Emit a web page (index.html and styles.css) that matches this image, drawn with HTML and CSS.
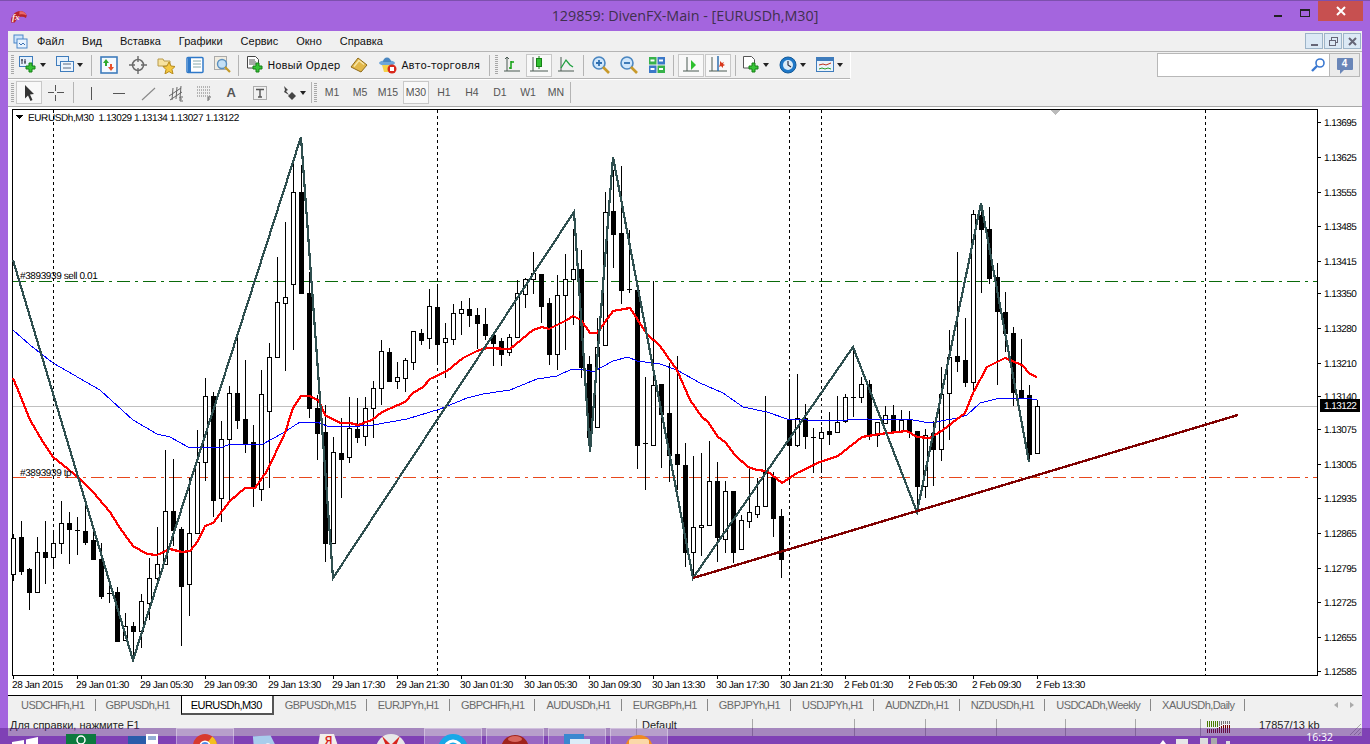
FILE: index.html
```html
<!DOCTYPE html>
<html lang="ru">
<head>
<meta charset="utf-8">
<title>129859: DivenFX-Main - [EURUSDh,M30]</title>
<link rel="stylesheet" href="styles.css">
</head>
<body>
<div class="window">
  <header class="titlebar">
    <div class="tb-left">
      <svg class="logo" viewBox="0 0 18 14"><path d="M1 13.500C0 7 5 1 11 1c3 0 6 2 7 5l-1 2.500c-3-2-7-1-9 0L5 13.500z" fill="#b8242a"/><path d="M10 1.500c4-.5 7 1.500 7.500 4.500-2.500-1.500-5-1.500-7.500-1z" fill="#e8686a"/><text class="logo-t" x="2" y="11">fx</text></svg>
    </div>
    <div class="title">129859: DivenFX-Main - [EURUSDh,M30]</div>
    <div class="winbtns">
      <div class="wb"><span class="wb-min"></span></div>
      <div class="wb"><span class="wb-max"></span></div>
      <div class="wb wb-close"><svg viewBox="0 0 10 10" class="wb-x"><path d="M1 1l8 8M9 1l-8 8"/></svg></div>
    </div>
  </header>
  <div class="client">
    <nav class="menubar">
      <svg class="mdi-ico" viewBox="0 0 15 15"><rect x="1" y="1" width="9" height="8" fill="#cfe4fb" stroke="#4a86c8"/><rect x="4" y="5" width="10" height="9" fill="#e8f2fd" stroke="#4a86c8"/><path d="M6 9l2 2 2-2 2 2" fill="none" stroke="#3a6fb0"/></svg>
      <span class="menu m1">Файл</span><span class="menu">Вид</span><span class="menu">Вставка</span><span class="menu">Графики</span><span class="menu">Сервис</span><span class="menu">Окно</span><span class="menu">Справка</span>
      <div class="mdibtns">
        <div class="mb"><span class="mb-min"></span></div>
        <div class="mb"><svg viewBox="0 0 11 11" class="mb-ico"><rect x="3.500" y="1.500" width="6" height="5" fill="none" stroke="#667"/><rect x="1.500" y="4.500" width="6" height="5" fill="#dce8f4" stroke="#667"/></svg></div>
        <div class="mb"><svg viewBox="0 0 11 11" class="mb-ico"><path d="M2 2l7 7M9 2l-7 7" stroke="#667" stroke-width="2"/></svg></div>
      </div>
    </nav>
    <div class="toolrow row1">
      <div class="grip"></div>
      <div class="tool w37"><svg class="ic" viewBox="0 0 18 18"><rect x=".5" y=".5" width="13" height="10" fill="#e6f1fc" stroke="#3f7cbc"/><path d="M3 3v5M2 4h2M6 3v5M5 6h2" stroke="#334"/><path d="M10 7h3v3h3v3h-3v3h-3v-3H7v-3h3z" fill="#37c437" stroke="#178017"/></svg><i class="caret"></i></div>
      <div class="tool w37"><svg class="ic" viewBox="0 0 18 18"><rect x=".5" y=".5" width="12" height="9" fill="#e6f1fc" stroke="#3f7cbc"/><rect x="4.500" y="5.500" width="13" height="10" fill="#eef5fd" stroke="#3f7cbc"/><path d="M7 8h8M7 12h8" stroke="#5a6a80"/></svg><i class="caret"></i></div>
      <div class="sep s-a"></div>
      <div class="tool w28"><svg class="ic" viewBox="0 0 18 18"><rect x="1" y="1" width="16" height="16" fill="#f4f9ff" stroke="#3f7cbc" stroke-width="1.600"/><path d="M6 3l3 4H7v3H5V7H3z" fill="#2eaa2e"/><path d="M11 15l-3-4h2V8h2v3h2z" fill="#e8502a"/></svg></div>
      <div class="tool w28"><svg class="ic" viewBox="0 0 18 18"><circle cx="9" cy="9" r="5.500" fill="none" stroke="#6a6a6a" stroke-width="1.500"/><path d="M9 0v6M9 12v6M0 9h6M12 9h6" stroke="#6a6a6a" stroke-width="1.400"/></svg></div>
      <div class="tool w28"><svg class="ic" viewBox="0 0 18 18"><path d="M1 3h5l1 2h6v5H1z" fill="#f7e2a0" stroke="#b89a4a"/><path d="M12 6l2 4 4 .5-3 3 1 4.500-4-2.500-4 2.500 1-4.500-3-3 4-.5z" fill="#f5c842" stroke="#b58a1c"/></svg></div>
      <div class="tool w28"><svg class="ic" viewBox="0 0 18 18"><rect x="1" y="1.500" width="16" height="15" rx="1" fill="#fff" stroke="#2f79c9" stroke-width="1.500"/><rect x="2" y="2" width="3" height="14" fill="#2f79c9"/><path d="M7 5h8M7 8h8M7 11h8" stroke="#8aa"/></svg></div>
      <div class="tool w28"><svg class="ic ic-w" viewBox="0 0 18 18"><rect x=".5" y=".5" width="12" height="13" fill="#f1ece0" stroke="#aaa"/><circle cx="8" cy="8" r="4.500" fill="#c4e0f6" stroke="#5a8fbf" stroke-width="1.400"/><path d="M11 11l5 5" stroke="#c49a2a" stroke-width="2.200"/></svg></div>
      <div class="sep s-b"></div>
      <div class="tool order"><svg class="ic" viewBox="0 0 18 18"><path d="M1.500.5h8l3 3V12h-11z" fill="#fff" stroke="#444"/><path d="M3 4h6M3 6h7M3 8h7" stroke="#555"/><path d="M10 7h3v3h3v3h-3v3h-3v-3H7v-3h3z" fill="#37c437" stroke="#178017"/></svg><span class="tool-txt">Новый Ордер</span></div>
      <div class="tool w24"><svg class="ic" viewBox="0 0 18 18"><path d="M1 11L8 2l9 7-6 7z" fill="#e2b84a" stroke="#8e6a1a"/><path d="M4 10.500l5-6 5 4" fill="none" stroke="#f6e6a8" stroke-width="1.400"/></svg></div>
      <div class="tool auto"><svg class="ic" viewBox="0 0 18 18"><ellipse cx="8" cy="7" rx="8" ry="2.800" fill="#6fa6d8"/><path d="M4 6c0-6 8-6 8 0z" fill="#4a86c0"/><path d="M3 9h10l-2 7H5z" fill="#f4d24a"/><circle cx="13" cy="13" r="4.500" fill="#d8281c"/><rect x="11" y="11" width="4" height="4" fill="#fff"/></svg><span class="tool-txt">Авто-торговля</span></div>
      <div class="sep s-c"></div>
      <div class="grip g2"></div>
      <div class="tool w28n t1"><svg class="ic" viewBox="0 0 18 18"><path class="ax" d="M4 1v14M1 15h16M2 3l2-2 2 2"/><path d="M8 5v8M6 12h2M8 6h3" stroke="#10a010" fill="none" stroke-width="1.500"/></svg></div>
      <div class="tool act w26"><svg class="ic" viewBox="0 0 18 18"><path class="ax" d="M3 1v14M0 15h18"/><path d="M9 0v13" stroke="#178017"/><rect x="6.500" y="2.500" width="5" height="8" fill="#30c030" stroke="#178017"/></svg></div>
      <div class="tool w28n"><svg class="ic" viewBox="0 0 18 18"><path class="ax" d="M4 1v14M1 15h16"/><path d="M4 12l5-8 4 5 3 2" fill="none" stroke="#20a040" stroke-width="1.300"/></svg></div>
      <div class="sep s-d"></div>
      <div class="tool w28n"><svg class="ic" viewBox="0 0 18 18"><circle cx="7" cy="7" r="6" fill="#cfe6fb" stroke="#4a86c0" stroke-width="1.600"/><path d="M4 7h6M7 4v6" stroke="#2f6fb0" stroke-width="1.800"/><path d="M11 11l6 6" stroke="#c89a2a" stroke-width="2.600"/></svg></div>
      <div class="tool w28n"><svg class="ic" viewBox="0 0 18 18"><circle cx="7" cy="7" r="6" fill="#cfe6fb" stroke="#4a86c0" stroke-width="1.600"/><path d="M4 7h6" stroke="#2f6fb0" stroke-width="1.800"/><path d="M11 11l6 6" stroke="#c89a2a" stroke-width="2.600"/></svg></div>
      <div class="tool w28n"><svg class="ic" viewBox="0 0 18 18"><rect x="1" y="1" width="7.500" height="7.500" fill="#36b24a"/><rect x="9.500" y="1" width="7.500" height="7.500" fill="#3a78c8"/><rect x="1" y="9.500" width="7.500" height="7.500" fill="#3a78c8"/><rect x="9.500" y="9.500" width="7.500" height="7.500" fill="#36b24a"/><path d="M2.500 4.500h4M11 4.500h4M2.500 13h4M11 13h4" stroke="#fff" stroke-width="2"/></svg></div>
      <div class="sep s-e"></div>
      <div class="tool act w26"><svg class="ic" viewBox="0 0 18 18"><path class="ax" d="M5 1v14M1 15h16"/><path d="M9 4l5 5-5 5z" fill="#2ec02e"/></svg></div>
      <div class="tool act w26 m2"><svg class="ic" viewBox="0 0 18 18"><path class="ax" d="M3 1v14M0 15h18"/><path d="M9 0v15" stroke="#2f6fb0" stroke-width="1.500"/><path d="M11 5l2 2 2-1-1 2 2 1-2 1v2l-2-2-2 1 1-3z" fill="#d8381c"/></svg></div>
      <div class="sep s-f"></div>
      <div class="tool w37"><svg class="ic" viewBox="0 0 18 18"><path d="M1.500.5h8l3 3V12h-11z" fill="#fff" stroke="#555"/><path d="M10 7h3v3h3v3h-3v3h-3v-3H7v-3h3z" fill="#37c437" stroke="#178017"/></svg><i class="caret"></i></div>
      <div class="tool w37"><svg class="ic" viewBox="0 0 18 18"><circle cx="9" cy="9" r="8" fill="#1f78c8" stroke="#155a98"/><circle cx="9" cy="9" r="5" fill="#dcecf8"/><path d="M9 5v4l3 2" fill="none" stroke="#334" stroke-width="1.200"/></svg><i class="caret"></i></div>
      <div class="tool w37"><svg class="ic" viewBox="0 0 18 18"><rect x=".5" y="1.500" width="17" height="14" fill="#eaf3fb" stroke="#3f7cbc"/><rect x="1" y="2" width="16" height="3" fill="#3f7cbc"/><path d="M3 9l4-1 3 1 5-2" fill="none" stroke="#c03018"/><path d="M3 13l3-1 3 1 3-1 3 1" fill="none" stroke="#2a9a2a"/></svg><i class="caret"></i></div>
      <div class="tb-end"></div>
      <div class="search"><svg class="mag" viewBox="0 0 14 14"><circle cx="9" cy="5" r="4" fill="#fff" stroke="#3a78d0" stroke-width="1.600"/><path d="M6 8l-5 5" stroke="#3a78d0" stroke-width="2.400"/></svg></div>
      <div class="bubble-btn"><div class="bubble">4</div></div>
    </div>
    <div class="toolrow row2">
      <div class="grip"></div>
      <div class="tool act w26 s2"><svg class="ic" viewBox="0 0 18 18"><path d="M5 1l9 9-4 .5 2.500 5.500-2 1L8 11.500 5 14.500z" fill="#333"/></svg></div>
      <div class="tool w28"><svg class="ic" viewBox="0 0 18 18"><path d="M8.500 1v6M8.500 11v6M1 8.500h6M10 8.500h7" stroke="#555"/></svg></div>
      <div class="sep s-g"></div>
      <div class="tool w28"><svg class="ic" viewBox="0 0 18 18"><path d="M9.500 3v13" stroke="#555"/></svg></div>
      <div class="tool w28"><svg class="ic" viewBox="0 0 18 18"><path d="M3 9.500h12" stroke="#555"/></svg></div>
      <div class="tool w28"><svg class="ic" viewBox="0 0 18 18"><path d="M3 16L16 4" stroke="#888" stroke-width="1.100"/></svg></div>
      <div class="tool w28"><svg class="ic" viewBox="0 0 18 18"><path d="M2 12l12-8M3 16l12-8M6 4l-1 12M10 3l-1 12M14 2l-1 12" stroke="#666"/><path d="M13 17v-4h3M13 15h2M13 17h3" stroke="#666" fill="none"/></svg></div>
      <div class="tool w28"><svg class="ic" viewBox="0 0 18 18"><path d="M1 3h14M1 6h14M1 9h14M1 12h14" stroke="#777" stroke-dasharray="1 1"/><path d="M12 17v-4h3M12 15h2" stroke="#666" fill="none"/></svg></div>
      <div class="tool w28 letter">A</div>
      <div class="tool w28"><svg class="ic" viewBox="0 0 18 18"><rect x="2.500" y="2.500" width="13" height="13" fill="none" stroke="#666" stroke-dasharray="1 1"/><path d="M5 5.500h8M9 5.500V13M7 13h4" stroke="#555" stroke-width="1.400" fill="none"/></svg></div>
      <div class="tool w37"><svg class="ic" viewBox="0 0 18 18"><path d="M5 2l4 4-2 1 3 4-5-3 1-2z" fill="#444"/><path d="M13 8l4 4-4 4-4-4z" fill="#444"/></svg><i class="caret"></i></div>
      <div class="sep"></div>
      <div class="grip g3"></div>
      <div class="tf">M1</div><div class="tf">M5</div><div class="tf">M15</div><div class="tf tf-act">M30</div><div class="tf">H1</div><div class="tf">H4</div><div class="tf">D1</div><div class="tf">W1</div><div class="tf">MN</div>
      <div class="sep"></div>
    </div>
    <div class="chart-wrap">
      <svg class="chart" viewBox="8 107 1354 588" width="1354" height="588">
        <rect class="frame" x="12.500" y="109.500" width="1305" height="566"/>
        <path class="grid" d="M53.500 110V675M437.500 110V675M789.500 110V675M821.500 110V675M1205.500 110V675"/>
        <path class="lvl-g" d="M13 281.500H1317"/>
        <path class="lvl-o" d="M13 477.500H1317"/>
        <path class="lvl-p" d="M13 406.500H1317"/>
        <path class="wick" d="M13.500 534V581M21.500 521V575M29.500 568V610M37.500 537V592M45.500 521V584M53.500 530V568M61.500 501V554M69.500 512V564M77.500 517V555M75 530.500h5M85.500 505V545M93.500 528V559M101.500 543V599M109.500 582V603M107 593.500h5M117.500 587V642M125.500 613V640M133.500 622V660M141.500 594V648M149.500 558V620M157.500 527V583M165.500 450V564M173.500 459V546M181.500 527V646M189.500 478V616M197.500 430V533M205.500 378V481M213.500 392V517M221.500 421V522M229.500 386V503M237.500 338V429M245.500 360V453M253.500 425V507M261.500 370V501M269.500 343V488M277.500 257V357M285.500 222V371M293.500 163V350M301.500 165V293M309.500 272V418M317.500 395V460M325.500 405V562M333.500 437V543M341.500 418V498M349.500 397V463M357.500 398V443M365.500 397V446M373.500 381V438M381.500 340V405M389.500 348V382M397.500 362V389M405.500 358V392M413.500 331V370M421.500 329V345M429.500 289V349M437.500 287V365M445.500 323V378M453.500 304V345M461.500 301V335M469.500 298V327M477.500 308V349M485.500 308V340M493.500 333V366M501.500 338V366M509.500 334V356M517.500 280V337M525.500 278V308M533.500 252V294M541.500 274V323M549.500 298V365M557.500 275V370M565.500 254V350M573.500 229V325M581.500 250V378M589.500 356V452M597.500 318V427M605.500 192V345M613.500 170V268M621.500 166V304M629.500 230V293M627 289.500h5M637.500 290V469M645.500 377V490M643 443.500h5M653.500 281V445M661.500 384V468M669.500 363V482M677.500 356V490M685.500 443V567M693.500 456V578M701.500 453V556M709.500 441V525M717.500 462V562M725.500 481V553M733.500 491V563M741.500 515V549M749.500 468V528M757.500 478V518M765.500 396V506M773.500 472V537M781.500 509V578M789.500 379V485M797.500 374V447M805.500 404V449M813.500 428V473M811 437.500h5M821.500 427V470M829.500 412V445M837.500 396V432M845.500 394V423M853.500 347V417M851 397.500h5M861.500 377V403M869.500 380V440M877.500 422V447M885.500 406V423M893.500 405V431M901.500 410V431M909.500 411V438M917.500 431V510M925.500 429V498M933.500 421V486M941.500 367V461M949.500 330V440M957.500 252V372M965.500 318V387M973.500 210V392M981.500 203V293M989.500 207V284M997.500 263V385M1005.500 292V352M1013.500 327V406M1021.500 339V398M1029.500 385V462M1037.500 400V453"/>
        <path class="bull" d="M11.500 538.500h4v36h-4zM35.500 552.500h4v40h-4zM51.500 543.500h4v14h-4zM59.500 523.500h4v20h-4zM123.500 626.500h4v14h-4zM139.500 601.500h4v30h-4zM147.500 578.500h4v25h-4zM155.500 564.500h4v14h-4zM163.500 511.500h4v53h-4zM187.500 533.500h4v51h-4zM195.500 462.500h4v71h-4zM203.500 396.500h4v66h-4zM219.500 439.500h4v59h-4zM227.500 393.500h4v46h-4zM259.500 394.500h4v95h-4zM267.500 357.500h4v54h-4zM275.500 302.500h4v55h-4zM283.500 297.500h4v6h-4zM291.500 192.500h4v92h-4zM331.500 452.500h4v91h-4zM347.500 428.500h4v29h-4zM363.500 408.500h4v28h-4zM371.500 388.500h4v20h-4zM379.500 351.500h4v37h-4zM395.500 377.500h4v4h-4zM403.500 360.500h4v18h-4zM411.500 331.500h4v31h-4zM427.500 306.500h4v32h-4zM443.500 338.500h4v4h-4zM451.500 313.500h4v26h-4zM459.500 309.500h4v4h-4zM507.500 337.500h4v15h-4zM515.500 293.500h4v44h-4zM523.500 279.500h4v15h-4zM531.500 273.500h4v6h-4zM555.500 295.500h4v59h-4zM563.500 279.500h4v16h-4zM571.500 269.500h4v10h-4zM595.500 347.500h4v80h-4zM603.500 212.500h4v133h-4zM651.500 385.500h4v60h-4zM691.500 527.500h4v25h-4zM699.500 525.500h4v2h-4zM707.500 481.500h4v44h-4zM723.500 491.500h4v48h-4zM739.500 520.500h4v29h-4zM747.500 512.500h4v9h-4zM755.500 506.500h4v8h-4zM763.500 472.500h4v34h-4zM795.500 418.500h4v27h-4zM819.500 432.500h4v6h-4zM835.500 422.500h4v10h-4zM843.500 397.500h4v24h-4zM859.500 384.500h4v13h-4zM875.500 422.500h4v13h-4zM883.500 415.500h4v8h-4zM899.500 420.500h4v11h-4zM923.500 435.500h4v51h-4zM939.500 394.500h4v55h-4zM947.500 357.500h4v36h-4zM971.500 214.500h4v168h-4zM1035.500 406.500h4v47h-4z"/>
        <path class="bear" d="M19.500 537.500h4v34h-4zM27.500 569.500h4v23h-4zM43.500 552.500h4v5h-4zM67.500 523.500h4v6h-4zM83.500 531.500h4v11h-4zM91.500 540.500h4v19h-4zM99.500 559.500h4v37h-4zM115.500 592.500h4v49h-4zM131.500 626.500h4v5h-4zM171.500 511.500h4v19h-4zM179.500 529.500h4v57h-4zM211.500 396.500h4v104h-4zM235.500 393.500h4v27h-4zM243.500 419.500h4v24h-4zM251.500 442.500h4v46h-4zM299.500 192.500h4v101h-4zM307.500 293.500h4v115h-4zM315.500 408.500h4v25h-4zM323.500 432.500h4v111h-4zM339.500 453.500h4v6h-4zM355.500 429.500h4v8h-4zM387.500 352.500h4v29h-4zM419.500 333.500h4v7h-4zM435.500 307.500h4v37h-4zM467.500 309.500h4v6h-4zM475.500 315.500h4v8h-4zM483.500 324.500h4v11h-4zM491.500 335.500h4v8h-4zM499.500 341.500h4v13h-4zM539.500 274.500h4v32h-4zM547.500 303.500h4v51h-4zM579.500 269.500h4v98h-4zM587.500 364.500h4v73h-4zM611.500 211.500h4v23h-4zM619.500 233.500h4v57h-4zM635.500 290.500h4v155h-4zM659.500 384.500h4v30h-4zM667.500 413.500h4v42h-4zM675.500 454.500h4v10h-4zM683.500 465.500h4v87h-4zM715.500 481.500h4v56h-4zM731.500 491.500h4v61h-4zM771.500 477.500h4v41h-4zM779.500 516.500h4v43h-4zM787.500 420.500h4v25h-4zM803.500 418.500h4v18h-4zM827.500 431.500h4v3h-4zM867.500 384.500h4v51h-4zM891.500 415.500h4v16h-4zM907.500 419.500h4v12h-4zM915.500 431.500h4v55h-4zM931.500 433.500h4v16h-4zM955.500 356.500h4v5h-4zM963.500 360.500h4v22h-4zM979.500 215.500h4v14h-4zM987.500 229.500h4v49h-4zM995.500 277.500h4v34h-4zM1003.500 312.500h4v21h-4zM1011.500 333.500h4v59h-4zM1019.500 390.500h4v8h-4zM1027.500 395.500h4v59h-4z"/>
        <polyline class="ma-blue" points="13,330 30,345 53,363 100,390 133,420 157,434 170,437 188,447 223,447 230,444 263,444 283,433 300,422 317,422 327,426 347,427 373,425 407,419 440,409 467,398 483,394 510,390 537,379 557,376 572,369 583,369 593,372 613,361 628,357 637,361 660,364 677,370 700,383 723,393 743,407 767,412 787,419 827,421 847,420 867,419 913,420 930,423 957,418 967,415 980,403 1000,398 1027,398 1037,400"/>
        <polyline class="ma-red" points="13,378 20,395 30,420 43,442 53,457 68,469 80,479 93,492 110,512 120,528 133,546 147,554 157,555 170,549 182,552 190,551 198,541 205,526 213,523 230,501 245,488 255,488 267,471 285,433 293,408 301,396 310,396 319,401 325,415 340,423 350,423 358,425 372,420 382,412 405,402 413,393 423,387 430,379 447,371 463,358 477,351 487,348 510,349 533,330 542,327 549,329 567,320 573,316 581,320 590,333 597,333 613,311 630,308 647,334 660,346 677,370 690,400 702,417 708,422 718,437 725,442 735,455 748,467 757,470 767,471 782,483 797,473 820,462 838,456 862,437 880,434 907,431 917,437 930,438 943,430 965,413 973,393 987,367 1005,358 1022,365 1030,374 1037,377"/>
        <polyline class="zigzag" points="13,260 133,660 301,137 333,578 574,212 590,452 613,157 693,578 853,347 917,512 981,203 1029,462"/>
        <line class="trend" x1="693" y1="578" x2="1238" y2="415"/>
        <path class="marker" d="M1050 110h10l-5 5z"/>
        <path class="legend-tri" d="M16 115h7l-3.500 4z"/>
        <text class="lbl lbl-l" x="28" y="121">EURUSDh,M30  1.13029 1.13134 1.13027 1.13122</text>
        <text class="lbl lbl-l" x="20" y="279">#3893939 sell 0.01</text>
        <text class="lbl lbl-l" x="20" y="476">#3893939 tp</text>
        <path class="tick" d="M1318 122.500h3M1318 157.500h3M1318 192.500h3M1318 226.500h3M1318 261.500h3M1318 293.500h3M1318 328.500h3M1318 363.500h3M1318 396.500h3M1318 429.500h3M1318 464.500h3M1318 498.500h3M1318 533.500h3M1318 568.500h3M1318 602.500h3M1318 637.500h3M1318 671.500h3M13.500 675v4M77.500 675v4M141.500 675v4M205.500 675v4M269.500 675v4M333.500 675v4M397.500 675v4M461.500 675v4M525.500 675v4M589.500 675v4M653.500 675v4M717.500 675v4M781.500 675v4M845.500 675v4M909.500 675v4M973.500 675v4M1037.500 675v4"/>
        <g class="lbl lbl-p">
          <text x="1324" y="126">1.13695</text><text x="1324" y="161">1.13625</text><text x="1324" y="196">1.13555</text><text x="1324" y="230">1.13485</text><text x="1324" y="265">1.13415</text><text x="1324" y="297">1.13350</text><text x="1324" y="332">1.13280</text><text x="1324" y="367">1.13210</text><text x="1324" y="400">1.13140</text><text x="1324" y="433">1.13075</text><text x="1324" y="468">1.13005</text><text x="1324" y="502">1.12935</text><text x="1324" y="537">1.12865</text><text x="1324" y="572">1.12795</text><text x="1324" y="606">1.12725</text><text x="1324" y="641">1.12655</text><text x="1324" y="675">1.12585</text>
        </g>
        <rect x="1320" y="399" width="40" height="13"/>
        <text class="lbl lbl-p tag" x="1324" y="409">1.13122</text>
        <g class="lbl lbl-l">
          <text x="12" y="688">28 Jan 2015</text><text x="76" y="688">29 Jan 01:30</text><text x="140" y="688">29 Jan 05:30</text><text x="204" y="688">29 Jan 09:30</text><text x="268" y="688">29 Jan 13:30</text><text x="332" y="688">29 Jan 17:30</text><text x="396" y="688">29 Jan 21:30</text><text x="460" y="688">30 Jan 01:30</text><text x="524" y="688">30 Jan 05:30</text><text x="588" y="688">30 Jan 09:30</text><text x="652" y="688">30 Jan 13:30</text><text x="716" y="688">30 Jan 17:30</text><text x="780" y="688">30 Jan 21:30</text><text x="844" y="688">2 Feb 01:30</text><text x="908" y="688">2 Feb 05:30</text><text x="972" y="688">2 Feb 09:30</text><text x="1036" y="688">2 Feb 13:30</text>
        </g>
      </svg>
    </div>
    <div class="tabs">
      <div class="tab first">USDCHFh,H1</div><div class="tab pre">GBPUSDh,H1</div><div class="tab active">EURUSDh,M30</div><div class="tab">GBPUSDh,M15</div><div class="tab">EURJPYh,H1</div><div class="tab">GBPCHFh,H1</div><div class="tab">AUDUSDh,H1</div><div class="tab">EURGBPh,H1</div><div class="tab">GBPJPYh,H1</div><div class="tab">USDJPYh,H1</div><div class="tab">AUDNZDh,H1</div><div class="tab">NZDUSDh,H1</div><div class="tab">USDCADh,Weekly</div><div class="tab">XAUUSDh,Daily</div>
      <div class="tab-arrows"><i class="ta-l"></i><i class="ta-r"></i></div>
    </div>
    <footer class="status">
      <div class="st st-help">Для справки, нажмите F1</div>
      <div class="st st-prof">Default</div>
      <div class="st st-b"></div>
      <div class="st st-c"></div>
      <div class="st st-d"></div>
      <div class="st st-d2"></div>
      <div class="st st-d3"></div>
      <div class="st st-d4"></div>
      <div class="st st-conn">
        <svg class="conn" viewBox="0 0 24 12"><path d="M1 0v6M3 0v6M5 0v6M7 0v6M9 0v6M11 0v6" stroke="#4a7a00"/><path d="M13 0v5M15 0v4M17 0v3M19 0v3M21 0v3M23 0v3" stroke="#777"/><path d="M1 8v4M3 8v4M5 8v4M7 8v4M9 8v4M11 7v5M13 6v6M15 5v7M17 4v8M19 4v8M21 4v8M23 4v8" stroke="#700000"/></svg>
        <span class="traffic">17857/13 kb</span>
      </div>
      <svg class="gripper" viewBox="0 0 13 13"><path d="M1 12L12 1M5 12l7-7M9 12l3-3" stroke="#aaa" fill="none"/></svg>
    </footer>
  </div>
</div>
<div class="taskbar">
  <div class="tk tk-first"><svg class="tk-ico" viewBox="0 0 26 24"><path d="M0 8l12-2v6H0zM14 5.500L26 3v9H14z" fill="#fff"/></svg></div>
  <div class="tk"><svg class="tk-ico tk-store" viewBox="0 0 30 24"><rect width="30" height="24" fill="#0c7a3e"/><circle cx="15" cy="6" r="4" fill="none" stroke="#fff" stroke-width="1.500"/></svg></div>
  <div class="tk"><svg class="tk-ico tk-word" viewBox="0 0 30 24"><rect width="30" height="24" y="2" fill="#2a5caa"/><rect x="18" y="0" width="12" height="24" fill="#fff"/><path d="M20 3h8M20 5h8" stroke="#2a5caa"/></svg></div>
  <div class="tk box"><svg class="tk-ico tk-chrome" viewBox="0 0 30 30"><circle cx="15" cy="15" r="15" fill="#d83a2e"/><path d="M15 15L30 15a15 15 0 0 0-6-12z" fill="#f4c01e"/><circle cx="15" cy="15" r="6" fill="#4a88e8" stroke="#fff" stroke-width="2"/></svg></div>
  <div class="tk"><svg class="tk-ico tk-blue" viewBox="0 0 34 24"><path d="M1 1l20-1 12 24H3z" fill="#a8cdec"/><circle cx="18" cy="14" r="5" fill="#fff"/></svg></div>
  <div class="tk"><svg class="tk-ico tk-ya" viewBox="0 0 26 24"><path d="M4 0h14l8 24H0z" fill="#f2eeea"/><text class="tk-ya-t" x="9" y="9.500">Я</text></svg></div>
  <div class="tk"><svg class="tk-ico tk-yb" viewBox="0 0 30 24"><circle cx="15" cy="15" r="15" fill="#e8e8e8"/><path d="M6 2l9 9 9-9-9 22z" fill="#d8241c"/></svg></div>
  <div class="tk box"><svg class="tk-ico tk-sk" viewBox="0 0 30 24"><circle cx="15" cy="15" r="15" fill="#18a8e8"/><circle cx="15" cy="15" r="8" fill="none" stroke="#fff" stroke-width="3"/></svg></div>
  <div class="tk box"><svg class="tk-ico tk-ball" viewBox="0 0 28 24"><circle cx="14" cy="15" r="14" fill="#a0241c"/><ellipse cx="14" cy="5" rx="7" ry="3" fill="#d8665e"/></svg></div>
  <div class="tk box"><svg class="tk-ico tk-app" viewBox="0 0 26 24"><rect width="20" height="24" fill="#3a88d0"/><rect x="6" y="5" width="20" height="19" fill="#dcecf8"/><circle cx="8" cy="14" r="4" fill="#c87820"/></svg></div>
  <div class="tk box"><svg class="tk-ico tk-or" viewBox="0 0 28 24"><circle cx="14" cy="15" r="14" fill="#f08a20"/><rect x="4" y="5" width="20" height="8" rx="2" fill="#fbd8a8"/></svg></div>
  <div class="tray">
    <svg class="tray-ico" viewBox="0 0 70 6"><path d="M0 6l3-4 3 4z" fill="#fff"/><rect x="16" y="1" width="12" height="5" fill="#e8e8e8"/><rect x="40" y="0" width="8" height="6" fill="#ddd"/><rect x="51" y="0" width="6" height="6" fill="#aaa"/><rect x="66" y="3" width="4" height="3" fill="#ddd"/></svg>
    <span class="clock">16:32</span>
  </div>
</div>
</body>
</html>
```
FILE: styles.css
```css
* { box-sizing: border-box; }
html, body { margin: 0; padding: 0; }
body { width: 1370px; height: 744px; overflow: hidden; position: relative; background: #a465de; font-family: "Noto Sans", sans-serif; }
.window { height: 736px; display: flex; flex-direction: column; background: #a465de; border-top: 1px solid #7d50ad; }
.titlebar { height: 30px; display: grid; grid-template-columns: 1fr auto 1fr; }
.tb-left { padding: 9px 0 0 10px; }
.logo { width: 17px; height: 13px; display: block; }
.logo-t { font: italic bold 10px "Liberation Serif", serif; fill: #fbe8e8; }
.title { font: 14.300px "Open Sans", sans-serif; color: #40304e; line-height: 30px; }
.winbtns { display: flex; justify-content: flex-end; padding-right: 7px; height: 20px; }
.wb { width: 27px; height: 20px; display: flex; align-items: center; justify-content: center; }
.wb-close { width: 45px; background: #c75050; }
.wb-min { width: 8px; height: 2px; background: #222; margin-top: 9px; }
.wb-max { width: 10px; height: 8px; border: 1px solid #222; border-top-width: 2px; margin-top: 3px; }
.wb-x { width: 10px; height: 10px; }
.wb-x path { stroke: #fff; stroke-width: 2; }
.client { margin: 0 8px; flex: 1; min-height: 0; display: flex; flex-direction: column; background: #f0f0f0; }
.menubar { height: 21px; flex: none; display: flex; align-items: center; padding-left: 5px; font: 11px "Liberation Sans", sans-serif; color: #111; border-bottom: 1px solid #b4b4b4; }
.mdi-ico { width: 15px; height: 15px; margin-right: 9px; }
.menu { margin-right: 18px; }
.mdibtns { margin-left: auto; display: flex; gap: 1px; padding-right: 1px; }
.mb { width: 18px; height: 16px; background: #dce9f5; border: 1px solid #9db4c8; display: flex; align-items: center; justify-content: center; }
.mb-min { width: 7px; height: 2px; background: #667; margin-top: 7px; }
.mb-ico { width: 11px; height: 11px; }
.toolrow { display: flex; align-items: center; padding-left: 3px; position: relative; flex: none; }
.row1 { height: 27px; padding-bottom: 1px; }
.row1::after { content: ""; position: absolute; left: 0; width: 842px; bottom: 0; height: 1px; background: #b4b4b4; }
.row2 { height: 28px; border-bottom: 1px solid #a8a8a8; }
.row2::before { content: ""; position: absolute; left: 0; width: 842px; top: 0; height: 1px; background: #fff; }
.grip { width: 3px; height: 20px; margin-right: 0; background: repeating-linear-gradient(#a8a8a8 0 1px, transparent 1px 2px); flex: none; }
.g2 { margin: 0 2px; }
.g3 { margin: 0 1px 0 2px; }
.tool { height: 23px; display: flex; align-items: center; justify-content: center; flex: none; }
.w37 { width: 37px; gap: 3px; }
.w28 { width: 28.500px; }
.w28n { width: 28px; }
.w26 { width: 26px; }
.w24 { width: 24px; }
.t1 { margin-left: -2px; }
.m2 { margin-left: 1px; }
.act { background: #f8f8f8; border: 1px solid #c8c8c8; }
.ic { width: 18px; height: 18px; display: block; flex: none; }
.ax { stroke: #4a5a52; fill: none; }
.caret { width: 0; height: 0; border: 3.500px solid transparent; border-top: 4px solid #222; border-bottom: 0; display: block; }
.sep { width: 1px; height: 21px; background: #b4b4b4; flex: none; }
.s-a { margin: 0 3px; }
.s-b { margin: 0 3px 0 0; }
.s-c { margin: 0 3px; }
.s-d { margin: 0 3px; }
.s-e { margin: 0 4px 0 2px; }
.s-f { margin: 0 1px 0 4px; }
.order { width: 105px; gap: 4px; justify-content: flex-start; padding-left: 4px; }
.auto { width: 115px; gap: 5px; justify-content: flex-start; padding-left: 8px; }
.tool-txt { font: 10.300px "DejaVu Sans", sans-serif; color: #111; white-space: nowrap; }
.tb-end { position: absolute; left: 842px; top: 0; bottom: 1px; width: 1px; background: #fff; }
.search { margin-left: auto; width: 173px; height: 24px; align-self: flex-start; margin-top: 1px; background: #fff; border: 1px solid #b8b8b8; display: flex; align-items: center; justify-content: flex-end; padding-right: 4px; }
.mag { width: 14px; height: 14px; }
.bubble-btn { width: 30px; height: 24px; align-self: flex-start; margin-top: 1px; margin-right: 2px; background: #ebebeb; border: 1px solid #b8b8b8; border-left: 0; display: flex; align-items: center; justify-content: center; }
.bubble { width: 16px; height: 12px; background: #6a86b8; color: #fff; font: bold 10px/12px "Liberation Sans", sans-serif; text-align: center; border-radius: 1px; position: relative; margin-top: -2px; }
.bubble::after { content: ""; position: absolute; left: 3px; top: 12px; border: 2px solid transparent; border-top-color: #6a86b8; border-left-color: #6a86b8; }
.s2 { margin-left: 2px; }
.s-g { margin: 0 3px 0 2px; }
.letter { font: bold 13px "Liberation Sans", sans-serif; color: #555; margin-left: -2px; }
.tf { width: 28px; height: 23px; font: 10.500px/23px "Liberation Sans", sans-serif; color: #555; text-align: center; flex: none; }
.tf-act { background: #f8f8f8; border: 1px solid #c8c8c8; line-height: 21px; width: 26px; margin: 0 1px; }
.chart-wrap { height: 588px; flex: none; background: #fff; }
.chart { display: block; shape-rendering: crispEdges; }
.frame { fill: #fff; stroke: #000; }
.grid { stroke: #000; stroke-dasharray: 3 3; fill: none; }
.lvl-g { stroke: #0a6a0a; stroke-dasharray: 13 5 3 5; fill: none; }
.lvl-o { stroke: #e8481c; stroke-dasharray: 13 5 3 5; fill: none; }
.lvl-p { stroke: #c0c0c0; fill: none; }
.wick { stroke: #000; fill: none; }
.bull { fill: #fff; stroke: #000; }
.bear { fill: #000; stroke: #000; }
.ma-blue { fill: none; stroke: #0000ff; }
.ma-red { fill: none; stroke: #ff0000; stroke-width: 2.200; }
.zigzag { fill: none; stroke: #2f4f4f; stroke-width: 2.200; }
.trend { stroke: #800000; stroke-width: 2.400; }
.marker { fill: #bbb; }
.tick { stroke: #000; fill: none; }
.lbl { font: 10px "Liberation Sans", sans-serif; fill: #000; white-space: pre; text-rendering: geometricPrecision; }
.lbl-l { letter-spacing: -.4px; }
.lbl-p { letter-spacing: -.55px; }
.tag { fill: #fff; }
.tabs { height: 19px; flex: none; display: flex; align-items: stretch; border-top: 1px solid #000; font: 11px/18px "Liberation Sans", sans-serif; letter-spacing: -.55px; color: #6a6a6a; position: relative; }
.tab { padding: 0 11px; position: relative; white-space: nowrap; }
.tab::after { content: ""; position: absolute; right: 0; top: 3px; height: 12px; width: 1px; background: #888; }
.tab.first { padding-left: 13px; }
.tab.pre { padding-left: 10px; }
.tab.pre::after { display: none; }
.tab.active { background: #fff; color: #000; border: 1px solid #000; border-top: 0; border-right: 2px solid #555; border-bottom: 2px solid #555; height: 19px; padding: 0 10px 0 9px; line-height: 18px; }
.tab.active::after { display: none; }
.tab-arrows { margin-left: auto; display: flex; gap: 12px; align-items: center; padding-right: 8px; }
.ta-l, .ta-r { width: 0; height: 0; border: 3.500px solid transparent; display: block; }
.ta-l { border-right: 4px solid #aaa; border-left: 0; }
.ta-r { border-left: 4px solid #aaa; border-right: 0; }
.status { flex: 1; display: flex; position: relative; font: 11px "Liberation Sans", sans-serif; color: #222; }
.st { height: 17px; margin-top: 5px; border-right: 1px solid #a8a8a8; flex: none; line-height: 13px; }
.st-help { width: 629px; padding-left: 2px; }
.st-prof { width: 116px; padding-left: 5px; }
.st-b { width: 102px; }
.st-c { width: 71px; }
.st-d { width: 71px; }
.st-d2 { width: 69px; }
.st-d3 { width: 70px; }
.st-d4 { width: 65px; }
.st-conn { border: 0; display: flex; align-items: flex-start; padding-left: 5px; gap: 29px; }
.conn { width: 24px; height: 12px; margin-top: 2px; shape-rendering: crispEdges; }
.traffic { line-height: 13px; }
.gripper { position: absolute; right: 0; bottom: 0; width: 13px; height: 13px; }
.taskbar { position: absolute; left: 0; right: 0; bottom: 0; height: 16px; background: rgba(90, 30, 140, .5); display: flex; overflow: hidden; }
.tk { width: 62px; flex: none; display: flex; justify-content: center; overflow: hidden; padding-top: 6px; }
.tk-first { width: 50px; }
.tk.box { background: rgba(255,255,255,.2); border: 1px solid rgba(255,255,255,.35); border-bottom: 0; margin: 0 2px; width: 58px; padding-top: 5px; }
.tk-ico { height: 24px; width: 30px; flex: none; display: block; }
.tk-ya-t { font: bold 10px "Liberation Sans", sans-serif; fill: #d8241c; }
.tray { margin-left: auto; width: 210px; position: relative; display: flex; justify-content: flex-end; padding-right: 37px; }
.tray-ico { position: absolute; left: 0; top: 10px; width: 70px; height: 6px; }
.clock { font: 10.500px/8px "Open Sans", sans-serif; color: #fff; padding-top: 5px; }
```
